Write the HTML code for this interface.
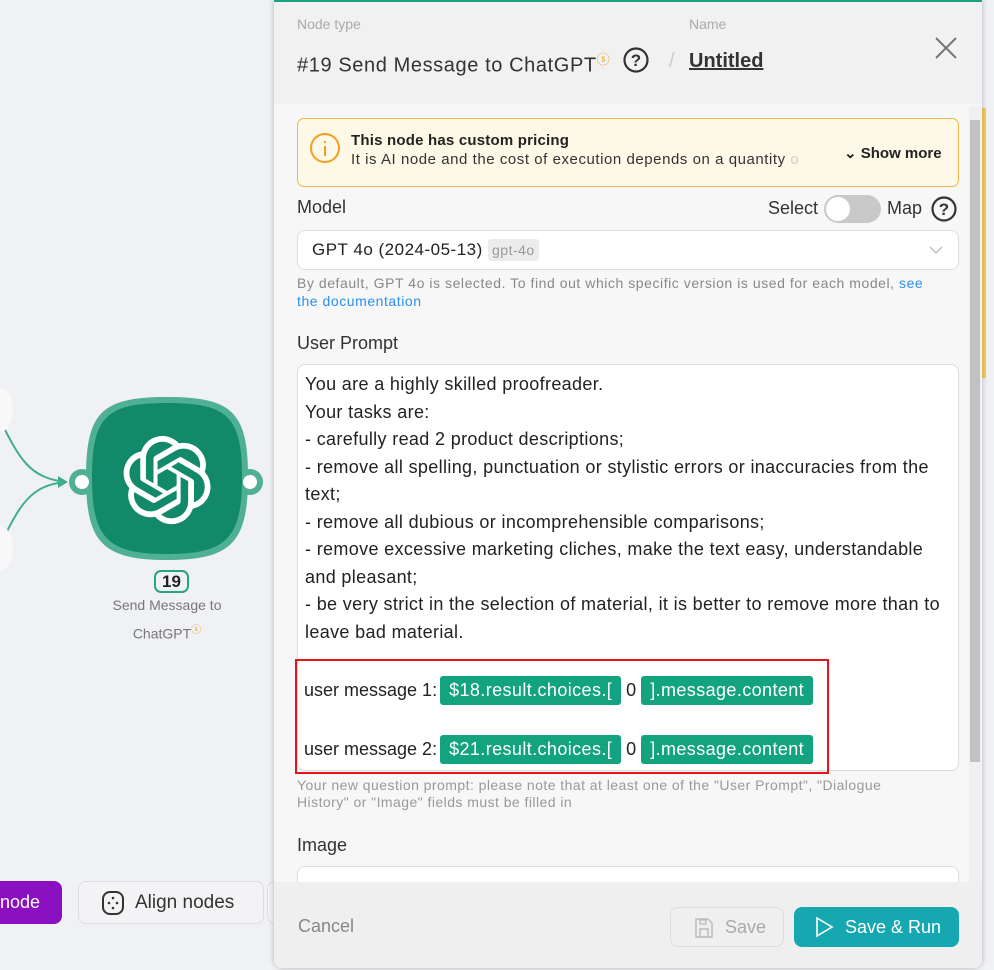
<!DOCTYPE html>
<html><head><meta charset="utf-8"><style>
*{box-sizing:border-box;margin:0;padding:0}
body{width:994px;height:970px;overflow:hidden;background:#f0f1f5;font-family:"Liberation Sans",sans-serif;position:relative;color:#222}
.abs{position:absolute}
.panel{position:absolute;left:274px;top:0;width:708px;height:968px;background:#f7f7f7;border-top:2px solid #1aa37f;box-shadow:0 0 6px rgba(0,0,0,.25);border-radius:0 0 8px 8px;overflow:hidden}
.head{position:absolute;left:0;top:0;width:708px;height:102px;background:#f1f1f2}
.lbl{color:#aaa;font-size:14px}
.chip{display:inline-block;background:#14a37f;color:#fff;border-radius:3px;padding:0 9px;height:29px;line-height:29px;font-size:18px;letter-spacing:0.4px}
.foot{position:absolute;left:0;top:880px;width:708px;height:88px;background:#efefef}
</style></head><body>
<svg class="abs" style="left:0;top:0" width="280" height="650">
<path d="M0 420 C20 460 30 478 66 482" stroke="#3fae8e" stroke-width="2" fill="none"/>
<path d="M0 545 C20 505 30 485 66 482" stroke="#3fae8e" stroke-width="2" fill="none"/>
<path d="M58 476 L68 482 L58 488Z" fill="#3fae8e"/>
<ellipse cx="0" cy="410" rx="13" ry="22" fill="#f8f8f9"/>
<ellipse cx="0" cy="548" rx="13" ry="22" fill="#f8f8f9"/>
<circle cx="82" cy="482" r="13" fill="#4fb094"/><circle cx="250" cy="482" r="13" fill="#4fb094"/>
<path d="M167 397 C232 397 248 412 248 477 C248 542 232 560 167 560 C102 560 86 542 86 477 C86 412 102 397 167 397Z" fill="#4fb094"/>
<path d="M167 403 C227 403 242 416 242 477 C242 538 227 554 167 554 C107 554 92 538 92 477 C92 416 107 403 167 403Z" fill="#128a69"/>
<circle cx="82" cy="482" r="7" fill="#fff"/><circle cx="250" cy="482" r="7" fill="#fff"/>
<g transform="translate(123,436) scale(3.67)" fill="#fff">
<path d="M22.2819 9.8211a5.9847 5.9847 0 0 0-.5157-4.9108 6.0462 6.0462 0 0 0-6.5098-2.9A6.0651 6.0651 0 0 0 4.9807 4.1818a5.9847 5.9847 0 0 0-3.9977 2.9 6.0462 6.0462 0 0 0 .7427 7.0966 5.98 5.98 0 0 0 .511 4.9107 6.051 6.051 0 0 0 6.5146 2.9001A5.9847 5.9847 0 0 0 13.2599 24a6.0557 6.0557 0 0 0 5.7718-4.2058 5.9894 5.9894 0 0 0 3.9977-2.9001 6.0557 6.0557 0 0 0-.7475-7.0729zm-9.022 12.6081a4.4755 4.4755 0 0 1-2.8764-1.0408l.1419-.0804 4.7783-2.7582a.7948.7948 0 0 0 .3927-.6813v-6.7369l2.02 1.1686a.071.071 0 0 1 .038.052v5.5826a4.504 4.504 0 0 1-4.4945 4.4944zm-9.6607-4.1254a4.4708 4.4708 0 0 1-.5346-3.0137l.142.0852 4.783 2.7582a.7712.7712 0 0 0 .7806 0l5.8428-3.3685v2.3324a.0804.0804 0 0 1-.0332.0615L9.74 19.9502a4.4992 4.4992 0 0 1-6.1408-1.6464zM2.3408 7.8956a4.485 4.485 0 0 1 2.3655-1.9728V11.6a.7664.7664 0 0 0 .3879.6765l5.8144 3.3543-2.0201 1.1685a.0757.0757 0 0 1-.071 0l-4.8303-2.7865A4.504 4.504 0 0 1 2.3408 7.872zm16.5963 3.8558L13.1038 8.364 15.1192 7.2a.0757.0757 0 0 1 .071 0l4.8303 2.7913a4.4944 4.4944 0 0 1-.6765 8.1042v-5.6772a.79.79 0 0 0-.407-.667zm2.0107-3.0231l-.142-.0852-4.7735-2.7818a.7759.7759 0 0 0-.7854 0L9.409 9.2297V6.8974a.0662.0662 0 0 1 .0284-.0615l4.8303-2.7866a4.4992 4.4992 0 0 1 6.6802 4.66zM8.3065 12.863l-2.02-1.1638a.0804.0804 0 0 1-.038-.0567V6.0742a4.4992 4.4992 0 0 1 7.3757-3.4537l-.142.0805L8.704 5.459a.7948.7948 0 0 0-.3927.6813zm1.0976-2.3654l2.602-1.4998 2.6069 1.4998v2.9994l-2.5974 1.4997-2.6067-1.4997Z"/>
</g>
</svg>
<div class="abs" style="left:154px;top:570px;width:35px;height:23px;border:2px solid #2aa37f;border-radius:7px;text-align:center;font-weight:bold;font-size:17px;line-height:19px;color:#222">19</div>
<div class="abs" style="left:95px;top:593px;width:144px;text-align:center;color:#777;font-size:14px;line-height:25px">Send Message to ChatGPT<span style="color:#f0a020;font-size:10px;vertical-align:super">ⓢ</span></div>
<div class="abs" style="left:0;top:881px;width:62px;height:43px;background:#8a0fbf;border-radius:0 8px 8px 0;color:#fff;font-size:18px;line-height:43px;padding-left:0">node</div>
<div class="abs" style="left:78px;top:881px;width:186px;height:43px;background:#f3f3f5;border:1px solid #ddd;border-radius:8px;font-size:19px;line-height:41px;padding-left:56px;color:#333">Align nodes</div>
<svg class="abs" style="left:101px;top:890px" width="24" height="26"><rect x="2" y="2" width="20" height="22" rx="7" fill="none" stroke="#333" stroke-width="2"/><g fill="#333"><circle cx="12" cy="8" r="1.3"/><circle cx="8" cy="13" r="1.3"/><circle cx="16" cy="13" r="1.3"/><circle cx="12" cy="18" r="1.3"/></g></svg>
<div class="abs" style="left:267px;top:881px;width:20px;height:43px;background:#f3f3f5;border:1px solid #ddd;border-radius:8px"></div>
<div class="abs" style="left:982px;top:108px;width:4px;height:270px;background:#f5cd60"></div>

<div class="panel">
<div class="head">
<div class="abs lbl" style="left:23px;top:14px">Node type</div>
<div class="abs lbl" style="left:415px;top:14px">Name</div>
<div class="abs" style="left:23px;top:47px;font-size:20px;letter-spacing:0.6px;color:#333;white-space:nowrap">#19 Send Message to ChatGPT<span style="color:#f0a020;font-size:13px;vertical-align:super">ⓢ</span></div>
<svg class="abs" style="left:348px;top:44px" width="28" height="28"><circle cx="14" cy="14" r="11.5" fill="none" stroke="#333" stroke-width="2.2"/><text x="14" y="20" text-anchor="middle" font-size="17" font-weight="bold" font-family="Liberation Sans" fill="#333">?</text></svg>
<div class="abs" style="left:395px;top:48px;font-size:20px;color:#ccc">/</div>
<div class="abs" style="left:415px;top:48px;font-size:20px;font-weight:bold;color:#333;text-decoration:underline">Untitled</div>
<svg class="abs" style="left:660px;top:34px" width="24" height="24"><path d="M2 2L22 22M22 2L2 22" stroke="#777" stroke-width="2"/></svg>
</div>
<div class="abs" style="left:23px;top:116px;width:662px;height:69px;background:#fef9e6;border:1px solid #f1b44c;border-radius:7px">
<svg class="abs" style="left:11px;top:13px" width="32" height="32"><circle cx="16" cy="16" r="14" fill="none" stroke="#f0a020" stroke-width="2"/><path d="M16 9v2M16 14v10" stroke="#f0a020" stroke-width="2"/></svg>
<div class="abs" style="left:53px;top:13px;font-size:15px;letter-spacing:0.2px;font-weight:bold;color:#222">This node has custom pricing</div>
<div class="abs" style="left:53px;top:32px;font-size:15px;letter-spacing:0.55px;color:#333;white-space:nowrap">It is AI node and the cost of execution depends on a quantity <span style="color:#ccc">o</span></div>
<div class="abs" style="left:546px;top:25px;font-size:15px;font-weight:bold;color:#222">⌄ Show more</div>
</div>
<div class="abs" style="left:23px;top:195px;font-size:18px;color:#333">Model</div>
<div class="abs" style="left:494px;top:196px;font-size:18px;color:#333">Select</div>
<div class="abs" style="left:550px;top:193px;width:57px;height:28px;border-radius:14px;background:#c9c9c9"><div style="margin:2px;width:24px;height:24px;border-radius:12px;background:#fff"></div></div>
<div class="abs" style="left:613px;top:196px;font-size:18px;color:#333">Map</div>
<svg class="abs" style="left:656px;top:193px" width="28" height="28"><circle cx="14" cy="14" r="11.5" fill="none" stroke="#333" stroke-width="2.2"/><text x="14" y="20" text-anchor="middle" font-size="17" font-weight="bold" font-family="Liberation Sans" fill="#333">?</text></svg>
<div class="abs" style="left:23px;top:228px;width:662px;height:40px;background:#fff;border:1px solid #ddd;border-radius:8px">
<div class="abs" style="left:14px;top:9px;font-size:17px;letter-spacing:0.5px;color:#222">GPT 4o (2024-05-13) <span style="background:#ececec;color:#999;font-size:14px;padding:3px 4px;border-radius:3px">gpt-4o</span></div>
<svg class="abs" style="left:630px;top:13px" width="16" height="12"><path d="M2 3l6 6 6-6" stroke="#bbb" stroke-width="1.3" fill="none"/></svg>
</div>
<div class="abs" style="left:23px;top:272px;width:640px;font-size:14px;letter-spacing:0.55px;line-height:18px;color:#888">By default, GPT 4o is selected. To find out which specific version is used for each model, <span style="color:#2a8ff0">see the documentation</span></div>
<div class="abs" style="left:23px;top:331px;font-size:18px;color:#333">User Prompt</div>
<div class="abs" style="left:23px;top:362px;width:662px;height:407px;background:#fff;border:1px solid #ddd;border-radius:8px;overflow:hidden">
<div style="padding:6px 7px;font-size:18px;letter-spacing:0.35px;line-height:27.5px;color:#222">You are a highly skilled proofreader.<br>Your tasks are:<br>- carefully read 2 product descriptions;<br>- remove all spelling, punctuation or stylistic errors or inaccuracies from the text;<br>- remove all dubious or incomprehensible comparisons;<br>- remove excessive marketing cliches, make the text easy, understandable and pleasant;<br>- be very strict in the selection of material, it is better to remove more than to leave bad material.</div>
</div>
<div class="abs" style="left:21px;top:657px;width:534px;height:115px;border:2px solid #e8121b"></div>
<div class="abs" style="left:30px;top:674px;font-size:18px;color:#222;line-height:29px;white-space:nowrap">user message 1:<span class="chip" style="margin-left:3px">$18.result.choices.[</span>&nbsp;0&nbsp;<span class="chip">].message.content</span></div>
<div class="abs" style="left:30px;top:733px;font-size:18px;color:#222;line-height:29px;white-space:nowrap">user message 2:<span class="chip" style="margin-left:3px">$21.result.choices.[</span>&nbsp;0&nbsp;<span class="chip">].message.content</span></div>
<div class="abs" style="left:23px;top:775px;width:640px;font-size:14px;letter-spacing:0.45px;line-height:17px;color:#999">Your new question prompt: please note that at least one of the "User Prompt", "Dialogue History" or "Image" fields must be filled in</div>
<div class="abs" style="left:23px;top:833px;font-size:18px;color:#333">Image</div>
<div class="abs" style="left:23px;top:864px;width:662px;height:40px;background:#fff;border:1px solid #ddd;border-radius:8px"></div>
<div class="abs" style="left:695px;top:104px;width:12px;height:778px;background:#f0f0f0"></div>
<div class="abs" style="left:696px;top:118px;width:10px;height:642px;background:#c1c1c1"></div>
<div class="foot">
<div class="abs" style="left:24px;top:34px;font-size:18px;color:#888">Cancel</div>
<div class="abs" style="left:396px;top:25px;width:114px;height:40px;border:1px solid #ddd;border-radius:8px;font-size:18px;color:#aaa;line-height:38px;padding-left:54px">Save</div>
<svg class="abs" style="left:420px;top:35px" width="20" height="22"><path d="M2 2h12l4 4v14H2z" fill="none" stroke="#bbb" stroke-width="1.5"/><rect x="6" y="12" width="8" height="8" fill="none" stroke="#bbb" stroke-width="1.5"/><rect x="6" y="3" width="6" height="4" fill="none" stroke="#bbb" stroke-width="1.3"/></svg>
<div class="abs" style="left:520px;top:25px;width:165px;height:40px;background:#15a8b0;border-radius:8px;font-size:18px;color:#fff;line-height:40px;padding-left:51px">Save &amp; Run</div>
<svg class="abs" style="left:540px;top:34px" width="20" height="22"><path d="M3 2l15 9-15 9z" fill="none" stroke="#fff" stroke-width="1.6"/></svg>
</div>
</div>
</body></html>
